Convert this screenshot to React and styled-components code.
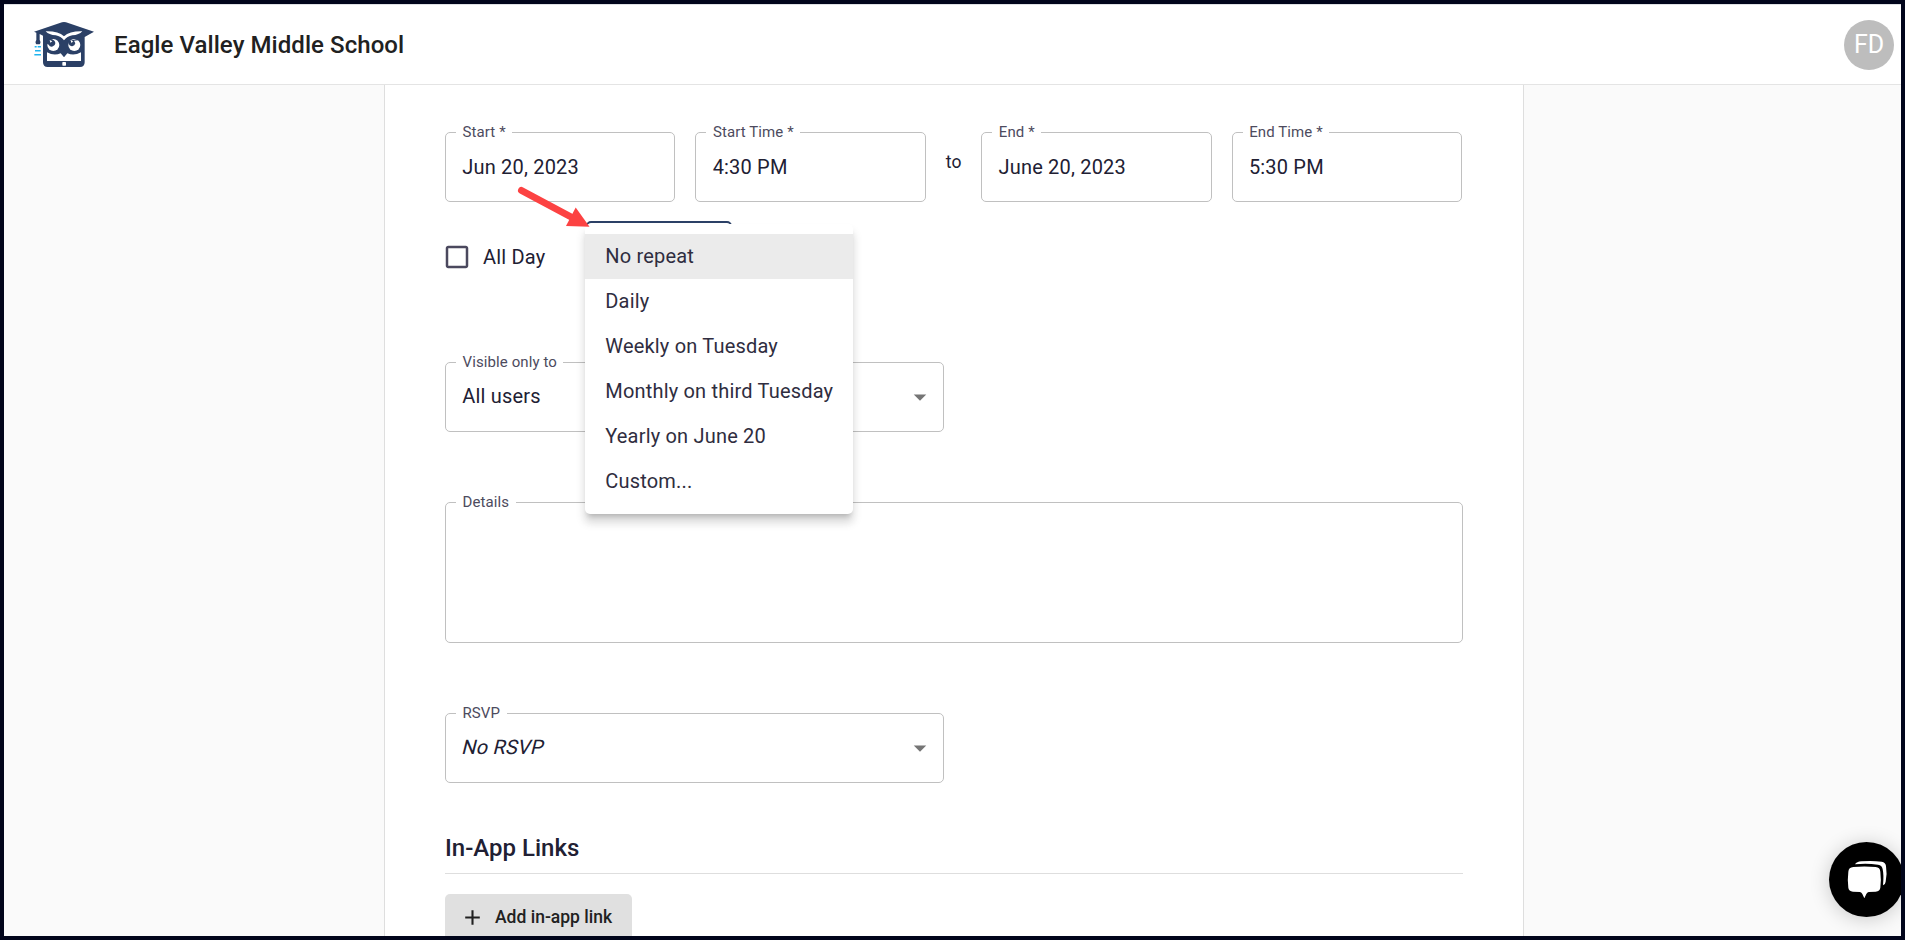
import React from "react";
import styled, { createGlobalStyle } from "styled-components";

const GlobalStyle = createGlobalStyle`
  *, *::before, *::after { box-sizing: border-box; }
  body { margin: 0; font-family: Roboto, "Liberation Sans", sans-serif; color: #212033; background: #fafafa; }
`;

const Frame = styled.div`
  position: relative;
  display: flex;
  flex-direction: column;
  height: 940px;
  border: 4px solid #01051b;
  background: #fafafa;
  overflow: hidden;
`;

const Header = styled.header`
  display: flex;
  align-items: center;
  flex: none;
  height: 81px;
  padding: 0 7px 0 30px;
  background: #fff;
  border-top: 1px solid #dfe1e4;
  border-bottom: 1px solid #e4e4e4;
`;

const SchoolName = styled.h1`
  flex: 1;
  margin: 1px 0 0 20px;
  font-size: 24px;
  font-weight: 500;
  line-height: 40px;
  letter-spacing: 0.07px;
  color: #212121;
`;

const Avatar = styled.div`
  display: flex;
  align-items: center;
  justify-content: center;
  width: 50px;
  height: 50px;
  border-radius: 50%;
  background: #bdbdbd;
  color: #fff;
  font-size: 25px;
`;

const Card = styled.main`
  flex: 1;
  width: 1140px;
  margin-left: 380px;
  padding: 47px 60px 0;
  background: #fff;
  border: solid #dedede;
  border-width: 0 1px;
`;

const Row = styled.div`
  display: flex;
  gap: 20px;
  margin-right: 1px;
`;

const OptionsRow = styled.div`
  display: flex;
  align-items: center;
  height: 70px;
  margin-top: 19px;
`;

const Field = styled.fieldset`
  display: flex;
  align-items: flex-start;
  justify-content: space-between;
  flex: ${(p) => (p.$width ? "none" : "1 1 0")};
  position: relative;
  min-width: 0;
  width: ${(p) => p.$width || "auto"};
  height: ${(p) => p.$height || "70px"};
  margin: ${(p) => p.$top || "0"} 0 0;
  padding: ${(p) => (p.$select ? "21px" : "22px")} 16px 0 16.25px;
  border: 1px solid #c0c0c0;
  border-radius: 5px;
`;

const Label = styled.span`
  position: absolute;
  top: -11px;
  left: 10px;
  padding: 0 6.5px;
  background: #fff;
  color: #4d4b5e;
  font-size: 15px;
  line-height: 20px;
  letter-spacing: 0.1px;
  white-space: nowrap;
`;

const Value = styled.span`
  font-size: 20px;
  line-height: 24px;
  letter-spacing: 0.19px;
  margin-left: ${(p) => (p.$oblique ? "-1px" : "0")};
  transform: ${(p) => (p.$oblique ? "skewX(-14deg)" : "none")};
  transform-origin: 0 19px;
`;

const Caret = styled.svg`
  width: 30px;
  height: 30px;
  margin: -2px -8px 0 0;
  fill: #757575;
`;

const To = styled.span`
  width: 15.5px;
  padding-top: 18px;
  font-size: 17.5px;
  line-height: 24px;
  letter-spacing: 0.17px;
`;

const Checkbox = styled.svg`
  width: 30px;
  height: 30px;
  margin: 2px 0 0 -3px;
  fill: #4b495e;
`;

const CheckLabel = styled.span`
  width: 103px;
  margin-left: 11px;
  padding: 1px 0 0 0;
  font-size: 20px;
  line-height: 24px;
  letter-spacing: 0.19px;
`;

const RepeatSelect = styled.div`
  position: relative;
  width: 146px;
  height: 70px;
  border: 2px solid #2b4066;
  border-radius: 5px;
`;

const Menu = styled.ul`
  position: absolute;
  top: 1px;
  left: -3px;
  z-index: 2;
  width: 268px;
  margin: 0;
  padding: 10px 0;
  list-style: none;
  background: #fff;
  border-radius: 5px;
  box-shadow: 0 5px 5px -3px rgba(0, 0, 0, 0.18), 0 8px 10px 1px rgba(0, 0, 0, 0.12), 0 9px 8px 0 rgba(0, 0, 0, 0.03);
`;

const MenuItem = styled.li`
  height: 45px;
  padding: 0 20px 0 20.25px;
  font-size: 20px;
  line-height: 45px;
  letter-spacing: 0.19px;
  white-space: nowrap;
  color: #2f2d40;
  background: ${(p) => (p.$selected ? "#ebebeb" : "transparent")};
`;

const SectionTitle = styled.h2`
  margin: 48px 0 0;
  padding-bottom: 7px;
  border-bottom: 1px solid #dedede;
  font-size: 24px;
  font-weight: 500;
  line-height: 35px;
`;

const AddButton = styled.button`
  display: flex;
  align-items: center;
  width: 187px;
  height: 46px;
  margin-top: 20px;
  padding: 0 20px 0 15px;
  border: 0;
  border-radius: 5px;
  background: #e0e0e0;
  color: #212121;
  font-family: inherit;
  font-size: 17.5px;
  font-weight: 500;
  white-space: nowrap;
`;

const PlusIcon = styled.svg`
  flex: none;
  width: 25px;
  height: 25px;
  margin-right: 10px;
  fill: currentColor;
`;

const ChatButton = styled.div`
  position: absolute;
  top: 838px;
  left: 1825px;
  width: 75px;
  height: 75px;
  border-radius: 50%;
  background: #000;
  box-shadow: 0 2px 20px rgba(0, 0, 0, 0.2);
`;

const ChatIcon = styled.svg`
  display: block;
  width: 75px;
  height: 75px;
`;

const Pointer = styled.svg`
  position: absolute;
  top: 178px;
  left: 508px;
  z-index: 3;
  width: 84px;
  height: 50px;
`;

const repeatOptions = [
  "No repeat",
  "Daily",
  "Weekly on Tuesday",
  "Monthly on third Tuesday",
  "Yearly on June 20",
  "Custom...",
];

function OwlLogo() {
  return (
    <svg width="60" height="45" viewBox="102 66 180 135">
      <path
        fill="#2b4066"
        d="M102 95 L186 67 Q192 65 198 67 L282 95 L254 111 V187 Q254 201 240 201 H143 Q129 201 129 187 V107 L119 102 V120 Q124 127 119 133 H109 Q104 127 109 120 V98Z"
      />
      <path fill="#fff" d="M137 94 Q175 93 192 109 Q209 93 247 94 Q237 105 217 106 Q201 109 192 121 Q183 109 167 106 Q147 105 137 94Z" />
      <circle cx="160" cy="135" r="18" fill="#fff" />
      <circle cx="223" cy="135" r="18" fill="#fff" />
      <path fill="#2b4066" d="M139 119 L151 116 Q166 119 166 130 A10.500 10.500 0 0 1 146 134 L139 130Z" />
      <path fill="#2b4066" d="M245 119 L234 116 L219 120 L205 124 L206 132 A10.500 10.500 0 0 0 226 130 L222 122Z" />
      <path fill="#fff" d="M149 120 l8 4 -6 4z M213 121 l7 4 -7 3z" />
      <path fill="#fff" d="M141 157 Q162 169 182 160 L192 172 L202 160 Q222 169 243 157 V183 H141Z" />
      <rect x="187" y="186" width="11" height="11" rx="2" fill="#fff" />
      <path stroke="#20b4ef" strokeWidth="4.500" fill="none" d="M104 140.500h6 M113 140.500h10 M105 152.500h17 M103 164.500h20" />
    </svg>
  );
}

function DropDownCaret() {
  return (
    <Caret viewBox="0 0 24 24">
      <path d="M7 10l5 5 5-5z" />
    </Caret>
  );
}

export default function App() {
  return (
    <Frame>
      <GlobalStyle />
      <Header>
        <OwlLogo />
        <SchoolName>Eagle Valley Middle School</SchoolName>
        <Avatar>FD</Avatar>
      </Header>
      <Card>
        <Row>
          <Field><Label>Start *</Label><Value>Jun 20, 2023</Value></Field>
          <Field><Label>Start Time *</Label><Value>4:30 PM</Value></Field>
          <To>to</To>
          <Field><Label>End *</Label><Value>June 20, 2023</Value></Field>
          <Field><Label>End Time *</Label><Value>5:30 PM</Value></Field>
        </Row>
        <OptionsRow>
          <Checkbox viewBox="0 0 24 24">
            <path d="M19 5v14H5V5h14m0-2H5c-1.100 0-2 .9-2 2v14c0 1.100.9 2 2 2h14c1.100 0 2-.9 2-2V5c0-1.100-.9-2-2-2z" />
          </Checkbox>
          <CheckLabel>All Day</CheckLabel>
          <RepeatSelect>
            <Menu>
              {repeatOptions.map((option, i) => (
                <MenuItem key={option} $selected={i === 0}>{option}</MenuItem>
              ))}
            </Menu>
          </RepeatSelect>
        </OptionsRow>
        <Field $width="499px" $top="71px" $select>
          <Label>Visible only to</Label><Value>All users</Value><DropDownCaret />
        </Field>
        <Field $width="100%" $height="141px" $top="70px"><Label>Details</Label></Field>
        <Field $width="499px" $top="70px" $select>
          <Label>RSVP</Label><Value $oblique>No RSVP</Value><DropDownCaret />
        </Field>
        <SectionTitle>In-App Links</SectionTitle>
        <AddButton>
          <PlusIcon viewBox="0 0 24 24"><path d="M19 13h-6v6h-2v-6H5v-2h6V5h2v6h6v2z" /></PlusIcon>
          Add in-app link
        </AddButton>
      </Card>
      <Pointer viewBox="512 182 84 50">
        <path d="M521.500 190.500 L573 218" stroke="#fc4242" strokeWidth="7" strokeLinecap="round" />
        <path d="M575.700 207.500 L589.500 226.700 L566 226Z" fill="#fc4242" />
      </Pointer>
      <ChatButton>
        <ChatIcon viewBox="147 66 225 225">
          <path fill="#fff" d="M220 141 Q253 138 287 141 Q300 142 301 155 Q304 178 301 203 Q300 213 287 215 L266 216 Q261 217 259 222 L253 235 L247 222 Q245 217 240 216 L219 215 Q206 213 205 203 Q202 178 205 155 Q206 142 220 141Z" />
          <path fill="#fff" d="M225 133 Q230 125 244 124 Q275 121 305 125 Q317 127 318 138 Q322 163 317 185 Q316 194 309 196 Q312 165 308 148 Q307 136 294 134 Q260 129 225 133Z" />
        </ChatIcon>
      </ChatButton>
    </Frame>
  );
}
